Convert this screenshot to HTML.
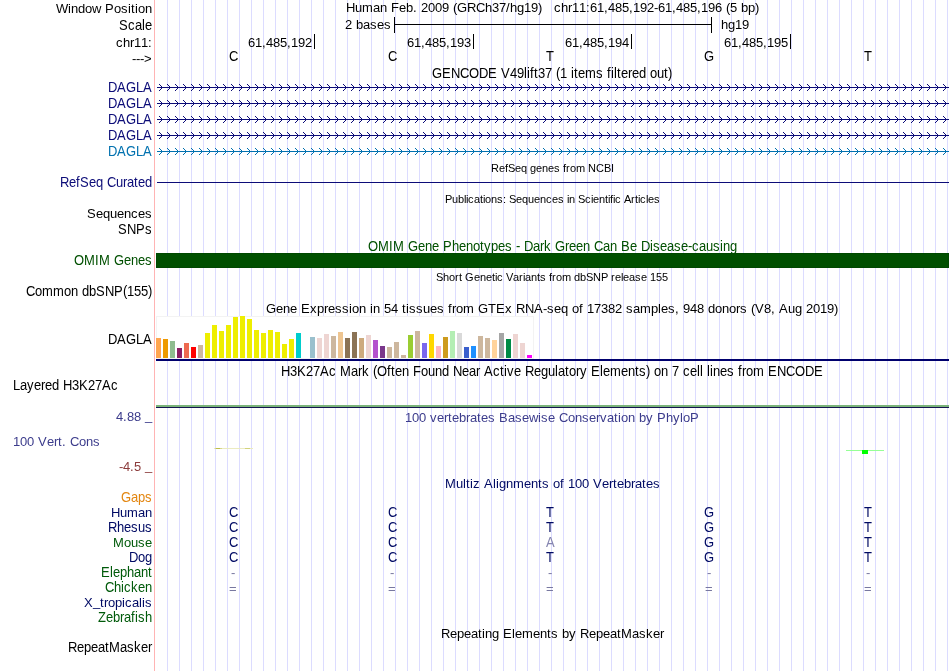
<!DOCTYPE html><html><head><meta charset="utf-8"><title>UCSC Genome Browser</title>
<style>html,body{margin:0;padding:0;background:#fff}body{width:950px;height:671px;overflow:hidden;position:relative;font-family:"Liberation Sans", sans-serif}svg{position:absolute;left:0;top:0;will-change:transform}text{font-family:"Liberation Sans", sans-serif;font-kerning:none}</style></head><body>
<svg width="950" height="671" viewBox="0 0 950 671">
<defs><g id="ar" shape-rendering="crispEdges"><rect x="-3" y="-3" width="1" height="1"/><rect x="-2" y="-2" width="1" height="1"/><rect x="-1" y="-1" width="1" height="1"/><rect x="-1" y="1" width="1" height="1"/><rect x="-2" y="2" width="1" height="1"/><rect x="-3" y="3" width="1" height="1"/></g>
</defs>
<g shape-rendering="crispEdges"><rect x="154" y="0" width="1" height="671" fill="#ffb4b4"/><rect x="167" y="0" width="1" height="671" fill="#dcdcff"/><rect x="179" y="0" width="1" height="671" fill="#dcdcff"/><rect x="191" y="0" width="1" height="671" fill="#dcdcff"/><rect x="203" y="0" width="1" height="671" fill="#dcdcff"/><rect x="215" y="0" width="1" height="671" fill="#dcdcff"/><rect x="227" y="0" width="1" height="671" fill="#dcdcff"/><rect x="239" y="0" width="1" height="671" fill="#dcdcff"/><rect x="251" y="0" width="1" height="671" fill="#dcdcff"/><rect x="263" y="0" width="1" height="671" fill="#dcdcff"/><rect x="275" y="0" width="1" height="671" fill="#dcdcff"/><rect x="287" y="0" width="1" height="671" fill="#dcdcff"/><rect x="299" y="0" width="1" height="671" fill="#dcdcff"/><rect x="311" y="0" width="1" height="671" fill="#dcdcff"/><rect x="323" y="0" width="1" height="671" fill="#dcdcff"/><rect x="335" y="0" width="1" height="671" fill="#dcdcff"/><rect x="347" y="0" width="1" height="671" fill="#dcdcff"/><rect x="359" y="0" width="1" height="671" fill="#dcdcff"/><rect x="371" y="0" width="1" height="671" fill="#dcdcff"/><rect x="383" y="0" width="1" height="671" fill="#dcdcff"/><rect x="395" y="0" width="1" height="671" fill="#dcdcff"/><rect x="407" y="0" width="1" height="671" fill="#dcdcff"/><rect x="419" y="0" width="1" height="671" fill="#dcdcff"/><rect x="431" y="0" width="1" height="671" fill="#dcdcff"/><rect x="443" y="0" width="1" height="671" fill="#dcdcff"/><rect x="455" y="0" width="1" height="671" fill="#dcdcff"/><rect x="467" y="0" width="1" height="671" fill="#dcdcff"/><rect x="479" y="0" width="1" height="671" fill="#dcdcff"/><rect x="491" y="0" width="1" height="671" fill="#dcdcff"/><rect x="503" y="0" width="1" height="671" fill="#dcdcff"/><rect x="515" y="0" width="1" height="671" fill="#dcdcff"/><rect x="527" y="0" width="1" height="671" fill="#dcdcff"/><rect x="539" y="0" width="1" height="671" fill="#dcdcff"/><rect x="551" y="0" width="1" height="671" fill="#dcdcff"/><rect x="563" y="0" width="1" height="671" fill="#dcdcff"/><rect x="575" y="0" width="1" height="671" fill="#dcdcff"/><rect x="587" y="0" width="1" height="671" fill="#dcdcff"/><rect x="599" y="0" width="1" height="671" fill="#dcdcff"/><rect x="611" y="0" width="1" height="671" fill="#dcdcff"/><rect x="623" y="0" width="1" height="671" fill="#dcdcff"/><rect x="635" y="0" width="1" height="671" fill="#dcdcff"/><rect x="647" y="0" width="1" height="671" fill="#dcdcff"/><rect x="659" y="0" width="1" height="671" fill="#dcdcff"/><rect x="671" y="0" width="1" height="671" fill="#dcdcff"/><rect x="683" y="0" width="1" height="671" fill="#dcdcff"/><rect x="695" y="0" width="1" height="671" fill="#dcdcff"/><rect x="707" y="0" width="1" height="671" fill="#dcdcff"/><rect x="719" y="0" width="1" height="671" fill="#dcdcff"/><rect x="731" y="0" width="1" height="671" fill="#dcdcff"/><rect x="743" y="0" width="1" height="671" fill="#dcdcff"/><rect x="755" y="0" width="1" height="671" fill="#dcdcff"/><rect x="767" y="0" width="1" height="671" fill="#dcdcff"/><rect x="779" y="0" width="1" height="671" fill="#dcdcff"/><rect x="791" y="0" width="1" height="671" fill="#dcdcff"/><rect x="803" y="0" width="1" height="671" fill="#dcdcff"/><rect x="815" y="0" width="1" height="671" fill="#dcdcff"/><rect x="827" y="0" width="1" height="671" fill="#dcdcff"/><rect x="839" y="0" width="1" height="671" fill="#dcdcff"/><rect x="851" y="0" width="1" height="671" fill="#dcdcff"/><rect x="863" y="0" width="1" height="671" fill="#dcdcff"/><rect x="875" y="0" width="1" height="671" fill="#dcdcff"/><rect x="887" y="0" width="1" height="671" fill="#dcdcff"/><rect x="899" y="0" width="1" height="671" fill="#dcdcff"/><rect x="911" y="0" width="1" height="671" fill="#dcdcff"/><rect x="923" y="0" width="1" height="671" fill="#dcdcff"/><rect x="935" y="0" width="1" height="671" fill="#dcdcff"/><rect x="947" y="0" width="1" height="671" fill="#dcdcff"/></g>
<g fill="#0c0c78" shape-rendering="crispEdges"><rect x="157" y="87" width="792" height="1"/><use href="#ar" x="162" y="87"/><use href="#ar" x="170" y="87"/><use href="#ar" x="178" y="87"/><use href="#ar" x="186" y="87"/><use href="#ar" x="194" y="87"/><use href="#ar" x="202" y="87"/><use href="#ar" x="210" y="87"/><use href="#ar" x="218" y="87"/><use href="#ar" x="226" y="87"/><use href="#ar" x="234" y="87"/><use href="#ar" x="242" y="87"/><use href="#ar" x="250" y="87"/><use href="#ar" x="258" y="87"/><use href="#ar" x="266" y="87"/><use href="#ar" x="274" y="87"/><use href="#ar" x="282" y="87"/><use href="#ar" x="290" y="87"/><use href="#ar" x="298" y="87"/><use href="#ar" x="306" y="87"/><use href="#ar" x="314" y="87"/><use href="#ar" x="322" y="87"/><use href="#ar" x="330" y="87"/><use href="#ar" x="338" y="87"/><use href="#ar" x="346" y="87"/><use href="#ar" x="354" y="87"/><use href="#ar" x="362" y="87"/><use href="#ar" x="370" y="87"/><use href="#ar" x="378" y="87"/><use href="#ar" x="386" y="87"/><use href="#ar" x="394" y="87"/><use href="#ar" x="402" y="87"/><use href="#ar" x="410" y="87"/><use href="#ar" x="418" y="87"/><use href="#ar" x="426" y="87"/><use href="#ar" x="434" y="87"/><use href="#ar" x="442" y="87"/><use href="#ar" x="450" y="87"/><use href="#ar" x="458" y="87"/><use href="#ar" x="466" y="87"/><use href="#ar" x="474" y="87"/><use href="#ar" x="482" y="87"/><use href="#ar" x="490" y="87"/><use href="#ar" x="498" y="87"/><use href="#ar" x="506" y="87"/><use href="#ar" x="514" y="87"/><use href="#ar" x="522" y="87"/><use href="#ar" x="530" y="87"/><use href="#ar" x="538" y="87"/><use href="#ar" x="546" y="87"/><use href="#ar" x="554" y="87"/><use href="#ar" x="562" y="87"/><use href="#ar" x="570" y="87"/><use href="#ar" x="578" y="87"/><use href="#ar" x="586" y="87"/><use href="#ar" x="594" y="87"/><use href="#ar" x="602" y="87"/><use href="#ar" x="610" y="87"/><use href="#ar" x="618" y="87"/><use href="#ar" x="626" y="87"/><use href="#ar" x="634" y="87"/><use href="#ar" x="642" y="87"/><use href="#ar" x="650" y="87"/><use href="#ar" x="658" y="87"/><use href="#ar" x="666" y="87"/><use href="#ar" x="674" y="87"/><use href="#ar" x="682" y="87"/><use href="#ar" x="690" y="87"/><use href="#ar" x="698" y="87"/><use href="#ar" x="706" y="87"/><use href="#ar" x="714" y="87"/><use href="#ar" x="722" y="87"/><use href="#ar" x="730" y="87"/><use href="#ar" x="738" y="87"/><use href="#ar" x="746" y="87"/><use href="#ar" x="754" y="87"/><use href="#ar" x="762" y="87"/><use href="#ar" x="770" y="87"/><use href="#ar" x="778" y="87"/><use href="#ar" x="786" y="87"/><use href="#ar" x="794" y="87"/><use href="#ar" x="802" y="87"/><use href="#ar" x="810" y="87"/><use href="#ar" x="818" y="87"/><use href="#ar" x="826" y="87"/><use href="#ar" x="834" y="87"/><use href="#ar" x="842" y="87"/><use href="#ar" x="850" y="87"/><use href="#ar" x="858" y="87"/><use href="#ar" x="866" y="87"/><use href="#ar" x="874" y="87"/><use href="#ar" x="882" y="87"/><use href="#ar" x="890" y="87"/><use href="#ar" x="898" y="87"/><use href="#ar" x="906" y="87"/><use href="#ar" x="914" y="87"/><use href="#ar" x="922" y="87"/><use href="#ar" x="930" y="87"/><use href="#ar" x="938" y="87"/><use href="#ar" x="946" y="87"/></g>
<g fill="#0c0c78" shape-rendering="crispEdges"><rect x="157" y="103" width="792" height="1"/><use href="#ar" x="162" y="103"/><use href="#ar" x="170" y="103"/><use href="#ar" x="178" y="103"/><use href="#ar" x="186" y="103"/><use href="#ar" x="194" y="103"/><use href="#ar" x="202" y="103"/><use href="#ar" x="210" y="103"/><use href="#ar" x="218" y="103"/><use href="#ar" x="226" y="103"/><use href="#ar" x="234" y="103"/><use href="#ar" x="242" y="103"/><use href="#ar" x="250" y="103"/><use href="#ar" x="258" y="103"/><use href="#ar" x="266" y="103"/><use href="#ar" x="274" y="103"/><use href="#ar" x="282" y="103"/><use href="#ar" x="290" y="103"/><use href="#ar" x="298" y="103"/><use href="#ar" x="306" y="103"/><use href="#ar" x="314" y="103"/><use href="#ar" x="322" y="103"/><use href="#ar" x="330" y="103"/><use href="#ar" x="338" y="103"/><use href="#ar" x="346" y="103"/><use href="#ar" x="354" y="103"/><use href="#ar" x="362" y="103"/><use href="#ar" x="370" y="103"/><use href="#ar" x="378" y="103"/><use href="#ar" x="386" y="103"/><use href="#ar" x="394" y="103"/><use href="#ar" x="402" y="103"/><use href="#ar" x="410" y="103"/><use href="#ar" x="418" y="103"/><use href="#ar" x="426" y="103"/><use href="#ar" x="434" y="103"/><use href="#ar" x="442" y="103"/><use href="#ar" x="450" y="103"/><use href="#ar" x="458" y="103"/><use href="#ar" x="466" y="103"/><use href="#ar" x="474" y="103"/><use href="#ar" x="482" y="103"/><use href="#ar" x="490" y="103"/><use href="#ar" x="498" y="103"/><use href="#ar" x="506" y="103"/><use href="#ar" x="514" y="103"/><use href="#ar" x="522" y="103"/><use href="#ar" x="530" y="103"/><use href="#ar" x="538" y="103"/><use href="#ar" x="546" y="103"/><use href="#ar" x="554" y="103"/><use href="#ar" x="562" y="103"/><use href="#ar" x="570" y="103"/><use href="#ar" x="578" y="103"/><use href="#ar" x="586" y="103"/><use href="#ar" x="594" y="103"/><use href="#ar" x="602" y="103"/><use href="#ar" x="610" y="103"/><use href="#ar" x="618" y="103"/><use href="#ar" x="626" y="103"/><use href="#ar" x="634" y="103"/><use href="#ar" x="642" y="103"/><use href="#ar" x="650" y="103"/><use href="#ar" x="658" y="103"/><use href="#ar" x="666" y="103"/><use href="#ar" x="674" y="103"/><use href="#ar" x="682" y="103"/><use href="#ar" x="690" y="103"/><use href="#ar" x="698" y="103"/><use href="#ar" x="706" y="103"/><use href="#ar" x="714" y="103"/><use href="#ar" x="722" y="103"/><use href="#ar" x="730" y="103"/><use href="#ar" x="738" y="103"/><use href="#ar" x="746" y="103"/><use href="#ar" x="754" y="103"/><use href="#ar" x="762" y="103"/><use href="#ar" x="770" y="103"/><use href="#ar" x="778" y="103"/><use href="#ar" x="786" y="103"/><use href="#ar" x="794" y="103"/><use href="#ar" x="802" y="103"/><use href="#ar" x="810" y="103"/><use href="#ar" x="818" y="103"/><use href="#ar" x="826" y="103"/><use href="#ar" x="834" y="103"/><use href="#ar" x="842" y="103"/><use href="#ar" x="850" y="103"/><use href="#ar" x="858" y="103"/><use href="#ar" x="866" y="103"/><use href="#ar" x="874" y="103"/><use href="#ar" x="882" y="103"/><use href="#ar" x="890" y="103"/><use href="#ar" x="898" y="103"/><use href="#ar" x="906" y="103"/><use href="#ar" x="914" y="103"/><use href="#ar" x="922" y="103"/><use href="#ar" x="930" y="103"/><use href="#ar" x="938" y="103"/><use href="#ar" x="946" y="103"/></g>
<g fill="#0c0c78" shape-rendering="crispEdges"><rect x="157" y="119" width="792" height="1"/><use href="#ar" x="162" y="119"/><use href="#ar" x="170" y="119"/><use href="#ar" x="178" y="119"/><use href="#ar" x="186" y="119"/><use href="#ar" x="194" y="119"/><use href="#ar" x="202" y="119"/><use href="#ar" x="210" y="119"/><use href="#ar" x="218" y="119"/><use href="#ar" x="226" y="119"/><use href="#ar" x="234" y="119"/><use href="#ar" x="242" y="119"/><use href="#ar" x="250" y="119"/><use href="#ar" x="258" y="119"/><use href="#ar" x="266" y="119"/><use href="#ar" x="274" y="119"/><use href="#ar" x="282" y="119"/><use href="#ar" x="290" y="119"/><use href="#ar" x="298" y="119"/><use href="#ar" x="306" y="119"/><use href="#ar" x="314" y="119"/><use href="#ar" x="322" y="119"/><use href="#ar" x="330" y="119"/><use href="#ar" x="338" y="119"/><use href="#ar" x="346" y="119"/><use href="#ar" x="354" y="119"/><use href="#ar" x="362" y="119"/><use href="#ar" x="370" y="119"/><use href="#ar" x="378" y="119"/><use href="#ar" x="386" y="119"/><use href="#ar" x="394" y="119"/><use href="#ar" x="402" y="119"/><use href="#ar" x="410" y="119"/><use href="#ar" x="418" y="119"/><use href="#ar" x="426" y="119"/><use href="#ar" x="434" y="119"/><use href="#ar" x="442" y="119"/><use href="#ar" x="450" y="119"/><use href="#ar" x="458" y="119"/><use href="#ar" x="466" y="119"/><use href="#ar" x="474" y="119"/><use href="#ar" x="482" y="119"/><use href="#ar" x="490" y="119"/><use href="#ar" x="498" y="119"/><use href="#ar" x="506" y="119"/><use href="#ar" x="514" y="119"/><use href="#ar" x="522" y="119"/><use href="#ar" x="530" y="119"/><use href="#ar" x="538" y="119"/><use href="#ar" x="546" y="119"/><use href="#ar" x="554" y="119"/><use href="#ar" x="562" y="119"/><use href="#ar" x="570" y="119"/><use href="#ar" x="578" y="119"/><use href="#ar" x="586" y="119"/><use href="#ar" x="594" y="119"/><use href="#ar" x="602" y="119"/><use href="#ar" x="610" y="119"/><use href="#ar" x="618" y="119"/><use href="#ar" x="626" y="119"/><use href="#ar" x="634" y="119"/><use href="#ar" x="642" y="119"/><use href="#ar" x="650" y="119"/><use href="#ar" x="658" y="119"/><use href="#ar" x="666" y="119"/><use href="#ar" x="674" y="119"/><use href="#ar" x="682" y="119"/><use href="#ar" x="690" y="119"/><use href="#ar" x="698" y="119"/><use href="#ar" x="706" y="119"/><use href="#ar" x="714" y="119"/><use href="#ar" x="722" y="119"/><use href="#ar" x="730" y="119"/><use href="#ar" x="738" y="119"/><use href="#ar" x="746" y="119"/><use href="#ar" x="754" y="119"/><use href="#ar" x="762" y="119"/><use href="#ar" x="770" y="119"/><use href="#ar" x="778" y="119"/><use href="#ar" x="786" y="119"/><use href="#ar" x="794" y="119"/><use href="#ar" x="802" y="119"/><use href="#ar" x="810" y="119"/><use href="#ar" x="818" y="119"/><use href="#ar" x="826" y="119"/><use href="#ar" x="834" y="119"/><use href="#ar" x="842" y="119"/><use href="#ar" x="850" y="119"/><use href="#ar" x="858" y="119"/><use href="#ar" x="866" y="119"/><use href="#ar" x="874" y="119"/><use href="#ar" x="882" y="119"/><use href="#ar" x="890" y="119"/><use href="#ar" x="898" y="119"/><use href="#ar" x="906" y="119"/><use href="#ar" x="914" y="119"/><use href="#ar" x="922" y="119"/><use href="#ar" x="930" y="119"/><use href="#ar" x="938" y="119"/><use href="#ar" x="946" y="119"/></g>
<g fill="#0c0c78" shape-rendering="crispEdges"><rect x="157" y="135" width="792" height="1"/><use href="#ar" x="162" y="135"/><use href="#ar" x="170" y="135"/><use href="#ar" x="178" y="135"/><use href="#ar" x="186" y="135"/><use href="#ar" x="194" y="135"/><use href="#ar" x="202" y="135"/><use href="#ar" x="210" y="135"/><use href="#ar" x="218" y="135"/><use href="#ar" x="226" y="135"/><use href="#ar" x="234" y="135"/><use href="#ar" x="242" y="135"/><use href="#ar" x="250" y="135"/><use href="#ar" x="258" y="135"/><use href="#ar" x="266" y="135"/><use href="#ar" x="274" y="135"/><use href="#ar" x="282" y="135"/><use href="#ar" x="290" y="135"/><use href="#ar" x="298" y="135"/><use href="#ar" x="306" y="135"/><use href="#ar" x="314" y="135"/><use href="#ar" x="322" y="135"/><use href="#ar" x="330" y="135"/><use href="#ar" x="338" y="135"/><use href="#ar" x="346" y="135"/><use href="#ar" x="354" y="135"/><use href="#ar" x="362" y="135"/><use href="#ar" x="370" y="135"/><use href="#ar" x="378" y="135"/><use href="#ar" x="386" y="135"/><use href="#ar" x="394" y="135"/><use href="#ar" x="402" y="135"/><use href="#ar" x="410" y="135"/><use href="#ar" x="418" y="135"/><use href="#ar" x="426" y="135"/><use href="#ar" x="434" y="135"/><use href="#ar" x="442" y="135"/><use href="#ar" x="450" y="135"/><use href="#ar" x="458" y="135"/><use href="#ar" x="466" y="135"/><use href="#ar" x="474" y="135"/><use href="#ar" x="482" y="135"/><use href="#ar" x="490" y="135"/><use href="#ar" x="498" y="135"/><use href="#ar" x="506" y="135"/><use href="#ar" x="514" y="135"/><use href="#ar" x="522" y="135"/><use href="#ar" x="530" y="135"/><use href="#ar" x="538" y="135"/><use href="#ar" x="546" y="135"/><use href="#ar" x="554" y="135"/><use href="#ar" x="562" y="135"/><use href="#ar" x="570" y="135"/><use href="#ar" x="578" y="135"/><use href="#ar" x="586" y="135"/><use href="#ar" x="594" y="135"/><use href="#ar" x="602" y="135"/><use href="#ar" x="610" y="135"/><use href="#ar" x="618" y="135"/><use href="#ar" x="626" y="135"/><use href="#ar" x="634" y="135"/><use href="#ar" x="642" y="135"/><use href="#ar" x="650" y="135"/><use href="#ar" x="658" y="135"/><use href="#ar" x="666" y="135"/><use href="#ar" x="674" y="135"/><use href="#ar" x="682" y="135"/><use href="#ar" x="690" y="135"/><use href="#ar" x="698" y="135"/><use href="#ar" x="706" y="135"/><use href="#ar" x="714" y="135"/><use href="#ar" x="722" y="135"/><use href="#ar" x="730" y="135"/><use href="#ar" x="738" y="135"/><use href="#ar" x="746" y="135"/><use href="#ar" x="754" y="135"/><use href="#ar" x="762" y="135"/><use href="#ar" x="770" y="135"/><use href="#ar" x="778" y="135"/><use href="#ar" x="786" y="135"/><use href="#ar" x="794" y="135"/><use href="#ar" x="802" y="135"/><use href="#ar" x="810" y="135"/><use href="#ar" x="818" y="135"/><use href="#ar" x="826" y="135"/><use href="#ar" x="834" y="135"/><use href="#ar" x="842" y="135"/><use href="#ar" x="850" y="135"/><use href="#ar" x="858" y="135"/><use href="#ar" x="866" y="135"/><use href="#ar" x="874" y="135"/><use href="#ar" x="882" y="135"/><use href="#ar" x="890" y="135"/><use href="#ar" x="898" y="135"/><use href="#ar" x="906" y="135"/><use href="#ar" x="914" y="135"/><use href="#ar" x="922" y="135"/><use href="#ar" x="930" y="135"/><use href="#ar" x="938" y="135"/><use href="#ar" x="946" y="135"/></g>
<g fill="#0171af" shape-rendering="crispEdges"><rect x="157" y="151" width="792" height="1"/><use href="#ar" x="162" y="151"/><use href="#ar" x="170" y="151"/><use href="#ar" x="178" y="151"/><use href="#ar" x="186" y="151"/><use href="#ar" x="194" y="151"/><use href="#ar" x="202" y="151"/><use href="#ar" x="210" y="151"/><use href="#ar" x="218" y="151"/><use href="#ar" x="226" y="151"/><use href="#ar" x="234" y="151"/><use href="#ar" x="242" y="151"/><use href="#ar" x="250" y="151"/><use href="#ar" x="258" y="151"/><use href="#ar" x="266" y="151"/><use href="#ar" x="274" y="151"/><use href="#ar" x="282" y="151"/><use href="#ar" x="290" y="151"/><use href="#ar" x="298" y="151"/><use href="#ar" x="306" y="151"/><use href="#ar" x="314" y="151"/><use href="#ar" x="322" y="151"/><use href="#ar" x="330" y="151"/><use href="#ar" x="338" y="151"/><use href="#ar" x="346" y="151"/><use href="#ar" x="354" y="151"/><use href="#ar" x="362" y="151"/><use href="#ar" x="370" y="151"/><use href="#ar" x="378" y="151"/><use href="#ar" x="386" y="151"/><use href="#ar" x="394" y="151"/><use href="#ar" x="402" y="151"/><use href="#ar" x="410" y="151"/><use href="#ar" x="418" y="151"/><use href="#ar" x="426" y="151"/><use href="#ar" x="434" y="151"/><use href="#ar" x="442" y="151"/><use href="#ar" x="450" y="151"/><use href="#ar" x="458" y="151"/><use href="#ar" x="466" y="151"/><use href="#ar" x="474" y="151"/><use href="#ar" x="482" y="151"/><use href="#ar" x="490" y="151"/><use href="#ar" x="498" y="151"/><use href="#ar" x="506" y="151"/><use href="#ar" x="514" y="151"/><use href="#ar" x="522" y="151"/><use href="#ar" x="530" y="151"/><use href="#ar" x="538" y="151"/><use href="#ar" x="546" y="151"/><use href="#ar" x="554" y="151"/><use href="#ar" x="562" y="151"/><use href="#ar" x="570" y="151"/><use href="#ar" x="578" y="151"/><use href="#ar" x="586" y="151"/><use href="#ar" x="594" y="151"/><use href="#ar" x="602" y="151"/><use href="#ar" x="610" y="151"/><use href="#ar" x="618" y="151"/><use href="#ar" x="626" y="151"/><use href="#ar" x="634" y="151"/><use href="#ar" x="642" y="151"/><use href="#ar" x="650" y="151"/><use href="#ar" x="658" y="151"/><use href="#ar" x="666" y="151"/><use href="#ar" x="674" y="151"/><use href="#ar" x="682" y="151"/><use href="#ar" x="690" y="151"/><use href="#ar" x="698" y="151"/><use href="#ar" x="706" y="151"/><use href="#ar" x="714" y="151"/><use href="#ar" x="722" y="151"/><use href="#ar" x="730" y="151"/><use href="#ar" x="738" y="151"/><use href="#ar" x="746" y="151"/><use href="#ar" x="754" y="151"/><use href="#ar" x="762" y="151"/><use href="#ar" x="770" y="151"/><use href="#ar" x="778" y="151"/><use href="#ar" x="786" y="151"/><use href="#ar" x="794" y="151"/><use href="#ar" x="802" y="151"/><use href="#ar" x="810" y="151"/><use href="#ar" x="818" y="151"/><use href="#ar" x="826" y="151"/><use href="#ar" x="834" y="151"/><use href="#ar" x="842" y="151"/><use href="#ar" x="850" y="151"/><use href="#ar" x="858" y="151"/><use href="#ar" x="866" y="151"/><use href="#ar" x="874" y="151"/><use href="#ar" x="882" y="151"/><use href="#ar" x="890" y="151"/><use href="#ar" x="898" y="151"/><use href="#ar" x="906" y="151"/><use href="#ar" x="914" y="151"/><use href="#ar" x="922" y="151"/><use href="#ar" x="930" y="151"/><use href="#ar" x="938" y="151"/><use href="#ar" x="946" y="151"/></g>
<rect x="157" y="182" width="792" height="1" fill="#0c0c78" shape-rendering="crispEdges"/>
<rect x="156.5" y="253.5" width="792" height="14" fill="#005000" stroke="#004800" stroke-width="1" shape-rendering="crispEdges"/>
<rect x="156.5" y="316.5" width="377" height="42" fill="#fff" stroke="#f3f3f3" stroke-width="1"/>
<g shape-rendering="crispEdges"><rect x="156" y="338" width="5" height="20" fill="#FFA54F"/><rect x="163" y="339" width="5" height="19" fill="#EE9A00"/><rect x="170" y="341" width="5" height="17" fill="#8FBC8F"/><rect x="177" y="348" width="5" height="10" fill="#8B1C62"/><rect x="184" y="343" width="5" height="15" fill="#EE6A50"/><rect x="191" y="347" width="5" height="11" fill="#FF0000"/><rect x="198" y="345" width="5" height="13" fill="#CDB79E"/><rect x="205" y="333" width="5" height="25" fill="#EEEE00"/><rect x="212" y="325" width="5" height="33" fill="#EEEE00"/><rect x="219" y="331" width="5" height="27" fill="#EEEE00"/><rect x="226" y="325" width="5" height="33" fill="#EEEE00"/><rect x="233" y="317" width="5" height="41" fill="#EEEE00"/><rect x="240" y="316" width="5" height="42" fill="#EEEE00"/><rect x="247" y="319" width="5" height="39" fill="#EEEE00"/><rect x="254" y="330" width="5" height="28" fill="#EEEE00"/><rect x="261" y="333" width="5" height="25" fill="#EEEE00"/><rect x="268" y="330" width="5" height="28" fill="#EEEE00"/><rect x="275" y="332" width="5" height="26" fill="#EEEE00"/><rect x="282" y="344" width="5" height="14" fill="#EEEE00"/><rect x="289" y="339" width="5" height="19" fill="#EEEE00"/><rect x="296" y="333" width="5" height="25" fill="#00CDCD"/><rect x="310" y="337" width="5" height="21" fill="#9AC0CD"/><rect x="317" y="338" width="5" height="20" fill="#EED5D2"/><rect x="324" y="334" width="5" height="24" fill="#EED5D2"/><rect x="331" y="336" width="5" height="22" fill="#CDB79E"/><rect x="338" y="332" width="5" height="26" fill="#EEC591"/><rect x="345" y="338" width="5" height="20" fill="#8B7355"/><rect x="352" y="332" width="5" height="26" fill="#8B7355"/><rect x="359" y="338" width="5" height="20" fill="#CDAA7D"/><rect x="366" y="335" width="5" height="23" fill="#EED5D2"/><rect x="373" y="340" width="5" height="18" fill="#B452CD"/><rect x="380" y="346" width="5" height="12" fill="#7A378B"/><rect x="387" y="347" width="5" height="11" fill="#CDB79E"/><rect x="394" y="342" width="5" height="16" fill="#CDB79E"/><rect x="401" y="355" width="5" height="3" fill="#CDB79E"/><rect x="408" y="335" width="5" height="23" fill="#9ACD32"/><rect x="415" y="331" width="5" height="27" fill="#CDB79E"/><rect x="422" y="343" width="5" height="15" fill="#7A67EE"/><rect x="429" y="334" width="5" height="24" fill="#FFD700"/><rect x="436" y="346" width="5" height="12" fill="#FFB6C1"/><rect x="443" y="337" width="5" height="21" fill="#CD9B1D"/><rect x="450" y="331" width="5" height="27" fill="#B4EEB4"/><rect x="457" y="333" width="5" height="25" fill="#D9D9D9"/><rect x="464" y="347" width="5" height="11" fill="#3A5FCD"/><rect x="471" y="346" width="5" height="12" fill="#1E90FF"/><rect x="478" y="336" width="5" height="22" fill="#CDB79E"/><rect x="485" y="338" width="5" height="20" fill="#CDB79E"/><rect x="492" y="340" width="5" height="18" fill="#FFD39B"/><rect x="499" y="333" width="5" height="25" fill="#A6A6A6"/><rect x="506" y="339" width="5" height="19" fill="#008B45"/><rect x="513" y="334" width="5" height="24" fill="#EED5D2"/><rect x="520" y="343" width="5" height="15" fill="#EED5D2"/><rect x="527" y="355" width="5" height="3" fill="#FF00FF"/><rect x="156" y="359" width="793" height="2" fill="#00006e"/><rect x="156" y="405" width="793" height="2" fill="#7ab47a"/><rect x="156" y="407" width="793" height="1" fill="#14144f"/><rect x="214" y="448" width="39" height="1" fill="#ebebc0"/><rect x="215" y="448" width="7" height="1" fill="#d6d68a"/><rect x="216" y="448" width="4" height="1" fill="#bebe4a"/><rect x="245" y="448" width="5" height="1" fill="#d2d27c"/><rect x="846" y="450" width="38" height="1" fill="#96ff96"/><rect x="862" y="450" width="6" height="4" fill="#00ff00"/><rect x="394" y="24" width="318" height="1" fill="#000"/><rect x="394" y="17" width="1" height="16" fill="#000"/><rect x="711" y="17" width="1" height="16" fill="#000"/><rect x="314" y="34" width="1" height="15" fill="#000"/><rect x="473" y="34" width="1" height="15" fill="#000"/><rect x="631" y="34" width="1" height="15" fill="#000"/><rect x="790" y="34" width="1" height="15" fill="#000"/></g>
<text transform="translate(0 13) scale(1 1.052)" x="56 68 71 78 85 92 101 105 114 121 128 131 135 138 145" font-size="13" fill="#000">Window Position</text>
<text transform="translate(0 30) scale(1 1.059)" x="119 128 135 142 145" font-size="13" fill="#000">Scale</text>
<text transform="translate(0 47) scale(1 1.031)" x="116 123 130 134 141 148" font-size="13" fill="#000">chr11:</text>
<text transform="translate(0 63) scale(1 1.0)" x="132 136 140 144" font-size="13" fill="#000">---&gt;</text>
<text transform="translate(0 92) scale(1 1.118)" x="108 117 126 136 143" font-size="13" fill="#0c0c78">DAGLA</text>
<text transform="translate(0 108) scale(1 1.118)" x="108 117 126 136 143" font-size="13" fill="#0c0c78">DAGLA</text>
<text transform="translate(0 124) scale(1 1.118)" x="108 117 126 136 143" font-size="13" fill="#0c0c78">DAGLA</text>
<text transform="translate(0 140) scale(1 1.118)" x="108 117 126 136 143" font-size="13" fill="#0c0c78">DAGLA</text>
<text transform="translate(0 156) scale(1 1.118)" x="108 117 126 136 143" font-size="13" fill="#0171af">DAGLA</text>
<text transform="translate(0 187) scale(1 1.062)" x="60 69 76 80 89 96 103 107 116 123 127 134 138 145" font-size="13" fill="#0c0c78">RefSeq Curated</text>
<text transform="translate(0 218) scale(1 1.044)" x="87 96 103 110 117 124 131 138 145" font-size="13" fill="#000">Sequences</text>
<text transform="translate(0 234) scale(1 1.097)" x="118 127 136 145" font-size="13" fill="#000">SNPs</text>
<text transform="translate(0 265) scale(1 1.081)" x="74 84 95 99 110 114 124 131 138 145" font-size="13" fill="#005000">OMIM Genes</text>
<text transform="translate(0 296) scale(1 1.058)" x="26 35 42 53 64 71 78 82 89 96 105 114 123 127 134 141 148" font-size="13" fill="#000">Common dbSNP(155)</text>
<text transform="translate(0 344) scale(1 1.118)" x="108 117 126 136 143" font-size="13" fill="#000">DAGLA</text>
<text transform="translate(0 390) scale(1 1.055)" x="13 20 27 34 41 45 52 59 63 72 79 88 95 102 111" font-size="13" fill="#000">Layered H3K27Ac</text>
<text transform="translate(0 421) scale(1 1.007)" x="116 123 127 134 141 145" dy="0 0 0 0 0 -1.3" font-size="13" fill="#3c3c8c">4.88 _</text>
<text transform="translate(0 446) scale(1 1.046)" x="13 20 27 34 38 47 54 58 62 66 70 79 86 93" font-size="13" fill="#3c3c8c">100 Vert. Cons</text>
<text transform="translate(0 471) scale(1 1.007)" x="119 123 130 134 141 145" dy="0 0 0 0 0 -1.3" font-size="13" fill="#8c3c3c">-4.5 _</text>
<text transform="translate(0 502) scale(1 1.056)" x="121 131 138 145" font-size="13" fill="#e38610">Gaps</text>
<text transform="translate(0 517) scale(1 1.052)" x="111 120 127 138 145" font-size="13" fill="#000a64">Human</text>
<text transform="translate(0 532) scale(1 1.055)" x="108 117 124 131 138 145" font-size="13" fill="#000a64">Rhesus</text>
<text transform="translate(0 547) scale(1 1.052)" x="113 124 131 138 145" font-size="13" fill="#005a0a">Mouse</text>
<text transform="translate(0 562) scale(1 1.063)" x="129 138 145" font-size="13" fill="#000a64">Dog</text>
<text transform="translate(0 577) scale(1 1.058)" x="101 110 113 120 127 134 141 148" font-size="13" fill="#005a0a">Elephant</text>
<text transform="translate(0 592) scale(1 1.057)" x="105 114 121 124 131 138 145" font-size="13" fill="#005a0a">Chicken</text>
<text transform="translate(0 607) scale(1 1.049)" x="84 93 100 104 108 115 122 125 132 139 142 145" dy="0 -1.3 1.3 0 0 0 0 0 0 0 0 0" font-size="13" fill="#000a64">X_tropicalis</text>
<text transform="translate(0 622) scale(1 1.056)" x="98 106 113 120 124 131 135 138 145" font-size="13" fill="#005a0a">Zebrafish</text>
<text transform="translate(0 652) scale(1 1.055)" x="68 77 84 91 98 105 109 120 127 134 141 148" font-size="13" fill="#000">RepeatMasker</text>
<text transform="translate(0 12) scale(1 1.048)" x="346 355 362 373 380 387 391 399 406 413 417 421 428 435 442 449 453 457 467 476 485 492 499 506 510 517 524 531 538" font-size="13" fill="#000">Human Feb. 2009 (GRCh37/hg19)</text>
<text transform="translate(0 12) scale(1 1.016)" x="554 561 568 572 579 586 590 597 604 608 615 622 629 633 640 647 654 658 665 672 676 683 690 697 701 708 715 722 726 730 737 741 748 755" font-size="13" fill="#000">chr11:61,485,192-61,485,196 (5 bp)</text>
<text transform="translate(0 29) scale(1 1.036)" x="345 352 356 363 370 377 384" font-size="13" fill="#000">2 bases</text>
<text transform="translate(0 29) scale(1 1.03)" x="721 728 735 742" font-size="13" fill="#000">hg19</text>
<text transform="translate(0 47) scale(1 1.007)" x="248 255 262 266 273 280 287 291 298 305" font-size="13" fill="#000">61,485,192</text>
<text transform="translate(0 47) scale(1 1.007)" x="407 414 421 425 432 439 446 450 457 464" font-size="13" fill="#000">61,485,193</text>
<text transform="translate(0 47) scale(1 1.007)" x="565 572 579 583 590 597 604 608 615 622" font-size="13" fill="#000">61,485,194</text>
<text transform="translate(0 47) scale(1 1.007)" x="724 731 738 742 749 756 763 767 774 781" font-size="13" fill="#000">61,485,195</text>
<text transform="translate(0 61) scale(1 1.118)" x="229" font-size="13" fill="#000">C</text>
<text transform="translate(0 61) scale(1 1.118)" x="388" font-size="13" fill="#000">C</text>
<text transform="translate(0 61) scale(1 1.118)" x="546" font-size="13" fill="#000">T</text>
<text transform="translate(0 61) scale(1 1.118)" x="704" font-size="13" fill="#000">G</text>
<text transform="translate(0 61) scale(1 1.118)" x="864" font-size="13" fill="#000">T</text>
<text transform="translate(0 78) scale(1 1.06)" x="432 442 451 460 469 479 488 497 501 510 517 524 527 530 534 538 545 552 556 560 567 571 574 578 585 596 603 607 611 614 617 621 628 632 639 646 650 657 664 668" font-size="13" fill="#000">GENCODE V49lift37 (1 items filtered out)</text>
<text transform="translate(0 172) scale(1 1.04)" x="491 499 505 508 515 521 527 530 536 542 548 554 560 563 566 570 576 585 588 596 604 611" font-size="11" fill="#000">RefSeq genes from NCBI</text>
<text transform="translate(0 203) scale(1 1.04)" x="445 452 458 464 466 468 474 480 483 485 491 497 503 506 509 516 522 528 534 540 546 552 558 564 567 569 575 578 585 591 593 599 605 608 610 613 615 621 624 631 635 638 640 646 648 654" font-size="11" fill="#000">Publications: Sequences in Scientific Articles</text>
<text transform="translate(0 251) scale(1 1.057)" x="368 378 389 393 404 408 418 425 432 439 443 452 459 466 473 480 484 491 498 505 512 516 520 524 533 540 544 551 555 565 569 576 583 590 594 603 610 617 621 630 637 641 650 653 660 667 674 681 688 692 699 706 713 720 723 730" font-size="13" fill="#005000">OMIM Gene Phenotypes - Dark Green Can Be Disease-causing</text>
<text transform="translate(0 281) scale(1 1.04)" x="436 443 449 455 459 462 465 474 480 486 492 495 497 503 506 513 519 523 525 531 537 540 546 549 552 556 562 571 574 580 586 593 601 608 611 615 621 623 629 635 641 647 650 656 662" font-size="11" fill="#000">Short Genetic Variants from dbSNP release 155</text>
<text transform="translate(0 313) scale(1 1.043)" x="266 276 283 290 297 301 310 317 324 328 335 342 349 352 359 366 370 373 380 384 391 398 402 406 409 416 423 430 437 444 448 452 456 463 474 478 488 496 505 512 516 525 534 543 547 554 561 568 572 579 583 587 594 601 608 615 622 626 633 640 651 658 661 668 675 679 683 690 697 704 708 715 722 729 736 740 747 751 755 764 771 775 779 788 795 802 806 813 820 827 834" font-size="13" fill="#000">Gene Expression in 54 tissues from GTEx RNA-seq of 17382 samples, 948 donors (V8, Aug 2019)</text>
<text transform="translate(0 376) scale(1 1.059)" x="281 290 297 306 313 320 329 336 340 351 358 362 369 373 377 387 391 395 402 409 413 421 428 435 442 449 453 462 469 476 480 484 493 500 504 507 514 521 525 534 541 548 555 558 565 569 576 580 587 591 600 603 610 621 628 635 639 646 650 654 661 668 672 679 683 690 697 700 703 707 710 713 720 727 734 738 742 746 753 764 768 777 786 795 805 814" font-size="13" fill="#000">H3K27Ac Mark (Often Found Near Active Regulatory Elements) on 7 cell lines from ENCODE</text>
<text transform="translate(0 422) scale(1 1.047)" x="405 412 419 426 430 437 444 448 452 459 466 470 477 481 488 495 499 508 515 522 529 538 541 548 555 559 568 575 582 589 596 600 607 614 618 621 628 635 639 646 653 657 666 673 680 683 690" font-size="13" fill="#3c3c8c">100 vertebrates Basewise Conservation by PhyloP</text>
<text transform="translate(0 488) scale(1 1.049)" x="445 456 463 466 470 473 480 484 493 496 499 506 513 524 531 538 542 549 553 560 564 568 575 582 589 593 602 609 613 617 624 631 635 642 646 653" font-size="13" fill="#000a64">Multiz Alignments of 100 Vertebrates</text>
<text transform="translate(0 638) scale(1 1.052)" x="441 450 457 464 471 478 482 485 492 499 503 512 515 522 533 540 547 551 558 562 569 576 580 589 596 603 610 617 621 632 639 646 653 660" font-size="13" fill="#000">Repeating Elements by RepeatMasker</text>
<text transform="translate(0 517) scale(1 1.118)" x="229" font-size="13" fill="#000a64">C</text>
<text transform="translate(0 532) scale(1 1.118)" x="229" font-size="13" fill="#000a64">C</text>
<text transform="translate(0 547) scale(1 1.118)" x="229" font-size="13" fill="#000a64">C</text>
<text transform="translate(0 562) scale(1 1.118)" x="229" font-size="13" fill="#000a64">C</text>
<text transform="translate(0 577) scale(1 1.0)" x="231" font-size="13" fill="#7878a0">-</text>
<text transform="translate(0 592) scale(1 1.0)" x="229" dy="1.4" font-size="13" fill="#7878a0">=</text>
<text transform="translate(0 517) scale(1 1.118)" x="388" font-size="13" fill="#000a64">C</text>
<text transform="translate(0 532) scale(1 1.118)" x="388" font-size="13" fill="#000a64">C</text>
<text transform="translate(0 547) scale(1 1.118)" x="388" font-size="13" fill="#000a64">C</text>
<text transform="translate(0 562) scale(1 1.118)" x="388" font-size="13" fill="#000a64">C</text>
<text transform="translate(0 577) scale(1 1.0)" x="390" font-size="13" fill="#7878a0">-</text>
<text transform="translate(0 592) scale(1 1.0)" x="388" dy="1.4" font-size="13" fill="#7878a0">=</text>
<text transform="translate(0 517) scale(1 1.118)" x="546" font-size="13" fill="#000a64">T</text>
<text transform="translate(0 532) scale(1 1.118)" x="546" font-size="13" fill="#000a64">T</text>
<text transform="translate(0 547) scale(1 1.118)" x="546" font-size="13" fill="#8585b0">A</text>
<text transform="translate(0 562) scale(1 1.118)" x="546" font-size="13" fill="#000a64">T</text>
<text transform="translate(0 577) scale(1 1.0)" x="548" font-size="13" fill="#7878a0">-</text>
<text transform="translate(0 592) scale(1 1.0)" x="546" dy="1.4" font-size="13" fill="#7878a0">=</text>
<text transform="translate(0 517) scale(1 1.118)" x="704" font-size="13" fill="#000a64">G</text>
<text transform="translate(0 532) scale(1 1.118)" x="704" font-size="13" fill="#000a64">G</text>
<text transform="translate(0 547) scale(1 1.118)" x="704" font-size="13" fill="#000a64">G</text>
<text transform="translate(0 562) scale(1 1.118)" x="704" font-size="13" fill="#000a64">G</text>
<text transform="translate(0 577) scale(1 1.0)" x="707" font-size="13" fill="#7878a0">-</text>
<text transform="translate(0 592) scale(1 1.0)" x="705" dy="1.4" font-size="13" fill="#7878a0">=</text>
<text transform="translate(0 517) scale(1 1.118)" x="864" font-size="13" fill="#000a64">T</text>
<text transform="translate(0 532) scale(1 1.118)" x="864" font-size="13" fill="#000a64">T</text>
<text transform="translate(0 547) scale(1 1.118)" x="864" font-size="13" fill="#000a64">T</text>
<text transform="translate(0 562) scale(1 1.118)" x="864" font-size="13" fill="#000a64">T</text>
<text transform="translate(0 577) scale(1 1.0)" x="866" font-size="13" fill="#7878a0">-</text>
<text transform="translate(0 592) scale(1 1.0)" x="864" dy="1.4" font-size="13" fill="#7878a0">=</text>
</svg></body></html>
